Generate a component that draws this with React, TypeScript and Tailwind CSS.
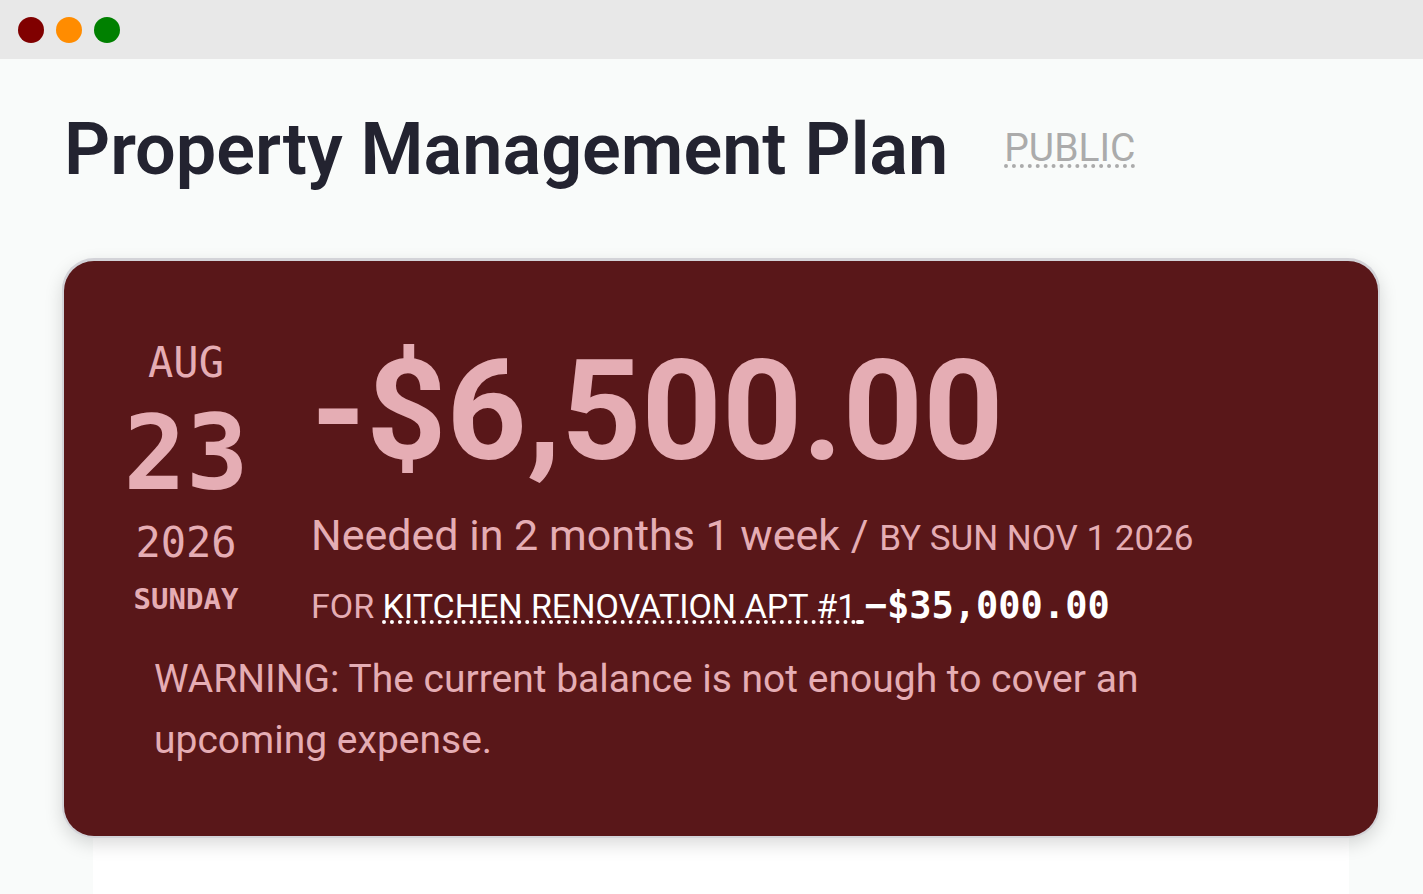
function WindowBar() {
  return (
    <div className="flex h-[59px] shrink-0 items-center gap-3 bg-[#e8e8e8] px-[18px]">
      <span className="size-[26px] rounded-full bg-[#800000]" />
      <span className="size-[26px] rounded-full bg-[#ff8c00]" />
      <span className="size-[26px] rounded-full bg-[#008000]" />
    </div>
  );
}

function DateBlock() {
  return (
    <time
      dateTime="2026-08-23"
      className="flex w-[120px] shrink-0 flex-col items-center font-['DejaVu_Sans_Mono',monospace]"
    >
      <span className="text-[42px] leading-[64px]">AUG</span>
      <span className="text-[104px] font-bold leading-[116px]">23</span>
      <span className="text-[42px] leading-[64px]">2026</span>
      <span className="text-[29px] font-bold leading-[48px]">SUNDAY</span>
    </time>
  );
}

function ExpenseCard() {
  return (
    <section className="relative rounded-[30px] bg-[#591719] px-[62px] pt-[70px] pb-[65px] text-[#e5adb4] shadow-[0_0_0_2px_#d3d3d8,0_-1px_0_2px_#d3d3d8,0_6px_18px_2px_rgba(0,0,0,0.15)]">
      <div className="flex gap-[65px]">
        <DateBlock />
        <div className="min-w-0 flex-1">
          <p className="text-[140px] font-bold leading-[160px]">-$6,500.00</p>
          <p className="pt-1.5 text-[43px] leading-[76px]">
            Needed in 2 months 1 week / <span className="text-[35px]">BY SUN NOV 1 2026</span>
          </p>
          <p className="text-[34px] leading-[58px]">
            FOR{' '}
            <a
              href="#kitchen"
              className="text-white underline decoration-dotted decoration-4 underline-offset-2"
            >
              KITCHEN RENOVATION APT #1{' '}
            </a>
            <span className="font-['DejaVu_Sans_Mono',monospace] text-[37px] font-bold text-white">
              −$35,000.00
            </span>
          </p>
        </div>
      </div>
      <p className="px-7 pt-3.5 text-[39px] leading-[61px]">
        WARNING: The current balance is not enough to cover an upcoming expense.
      </p>
    </section>
  );
}

export default function App() {
  return (
    <div className="flex min-h-screen flex-col bg-[#f9fbfa] font-[Roboto,sans-serif]">
      <WindowBar />
      <main className="flex flex-1 flex-col pr-[45px] pl-16">
        <header className="flex items-center gap-14 pt-[41px] pb-[61px]">
          <h1 className="text-[72px] font-semibold leading-[100px] text-[#232330]">
            Property Management Plan
          </h1>
          <a
            href="#public"
            className="border-b-4 border-dotted border-[#ababab] text-[39px] leading-8 text-[#ababab]"
          >
            PUBLIC
          </a>
        </header>
        <ExpenseCard />
        <div className="mx-[29px] flex-1 bg-white" />
      </main>
    </div>
  );
}
